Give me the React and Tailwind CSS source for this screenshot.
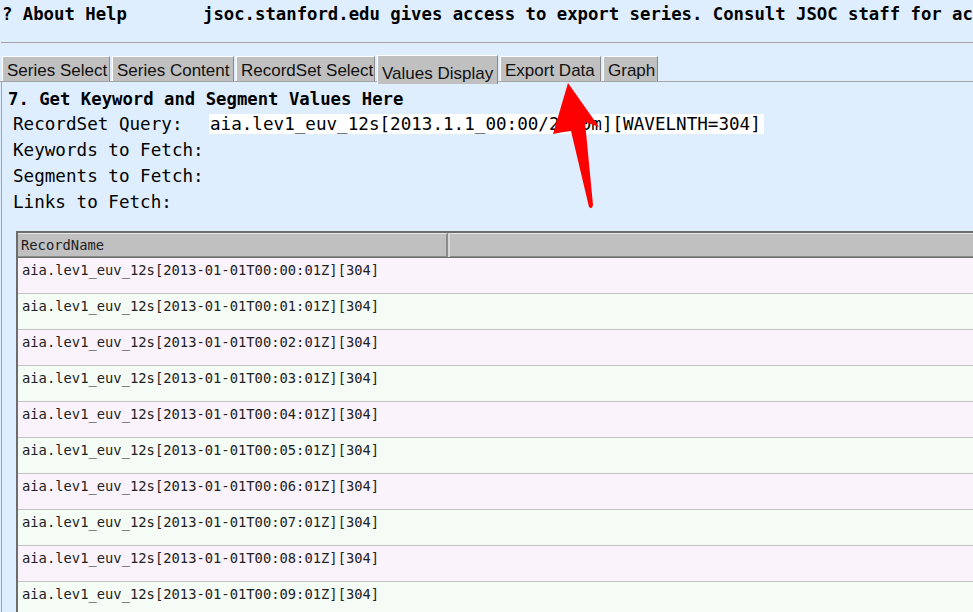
import React from 'react';

const tabs = [
  { label: 'Series Select', w: 'w-[108px]' },
  { label: 'Series Content', w: 'w-[122px]' },
  { label: 'RecordSet Select', w: 'w-[139px]' },
  { label: 'Values Display', w: 'w-[121px]', active: true },
  { label: 'Export Data', w: 'w-[101px]' },
  { label: 'Graph', w: 'w-[55px]' },
];

const records = Array.from({ length: 10 }, (_, i) => `aia.lev1_euv_12s[2013-01-01T00:0${i}:01Z][304]`);

const fields = ['Keywords to Fetch:', 'Segments to Fetch:', 'Links to Fetch:'];

const App = () => {
  return (
    <div className="relative w-[973px] h-[612px] overflow-hidden bg-[#dfeeff] text-black font-['DejaVu_Sans_Mono',monospace]">
      {/* top info line */}
      <div className="flex h-[42px] pl-[2px] pt-[4px] whitespace-nowrap font-bold text-[17.3px] leading-[20px]">
        <span className="w-[201px] shrink-0">? About Help</span>
        <span>jsoc.stanford.edu gives access to export series. Consult JSOC staff for access to other data.</span>
      </div>
      <div className="h-px ml-[1px] bg-[#a3a3a3]" />

      {/* tabs */}
      <div className="flex items-end gap-[2px] h-[39px] pl-[2px] border-b border-[#a3a3a3] font-['Liberation_Sans',Arial,sans-serif] text-[17px] text-[#111]">
        {tabs.map(t =>
          t.active ? (
            <div
              key={t.label}
              className={`${t.w} shrink-0 relative z-10 h-[29px] -mb-[3px] pl-[4px] pt-[8px] leading-[20px] whitespace-nowrap bg-[#c0c0c0] border-t border-l border-white border-r border-r-[#8a8a8a]`}
            >
              {t.label}
            </div>
          ) : (
            <div
              key={t.label}
              className={`${t.w} shrink-0 h-[25px] pl-[4px] pt-[4px] leading-[20px] whitespace-nowrap bg-[#c0c0c0] border-t border-l border-white border-r border-r-[#8a8a8a]`}
            >
              {t.label}
            </div>
          )
        )}
      </div>

      {/* panel */}
      <div className="ml-[1px] h-full border-l border-[#a3a3a3] pl-[6px] pt-[7px]">
        <div className="font-bold text-[17.3px] leading-[20px] whitespace-nowrap">
          7. Get Keyword and Segment Values Here
        </div>
        <div className="ml-[5px] mt-[2px] text-[17.6px] whitespace-nowrap">
          <div className="flex items-center h-[26px]">
            <span className="w-[196px] shrink-0">RecordSet Query:</span>
            <span className="bg-white leading-[20px] pl-[1px] pr-[3px]">
              aia.lev1_euv_12s[2013.1.1_00:00/2400m][WAVELNTH=304]
            </span>
          </div>
          {fields.map(f => (
            <div key={f} className="flex items-center h-[26px]">
              {f}
            </div>
          ))}
        </div>

        {/* results table */}
        <div className="mt-[16px] ml-[8px] w-[1100px] border-t-2 border-l-2 border-[#6d6d6d] text-[13.8px] text-[#222]">
          <div className="flex h-[25px] bg-[#c0c0c0] border-b border-[#6d6d6d]">
            <div className="w-[430px] shrink-0 pl-[3px] leading-[22px] border-t border-t-[#e6e6e6] border-r-2 border-r-[#8a8a8a] border-b border-b-[#8a8a8a]">
              RecordName
            </div>
            <div className="w-[2px] bg-[#d6d6d6]" />
            <div className="flex-1 border-t border-t-[#e6e6e6] border-b border-b-[#8a8a8a]" />
          </div>
          {records.map((r, i) => (
            <div
              key={r}
              className={`h-[36px] pl-[4px] pt-[4px] leading-[17px] border-b border-[#c2c2c2] whitespace-nowrap ${
                i % 2 === 0 ? 'bg-[#fbf3fc]' : 'bg-[#f5fcf6]'
              }`}
            >
              {r}
            </div>
          ))}
        </div>
      </div>

      {/* red annotation arrow */}
      <svg className="absolute left-0 top-0 pointer-events-none" width="973" height="612">
        <path
          d="M568 83 L599 127 Q591 124 585 122 L593 205 Q592 210 589 207 L571 131 Q562 132 553 134 Z"
          fill="#ff0000"
        />
      </svg>
    </div>
  );
};

export default App;
